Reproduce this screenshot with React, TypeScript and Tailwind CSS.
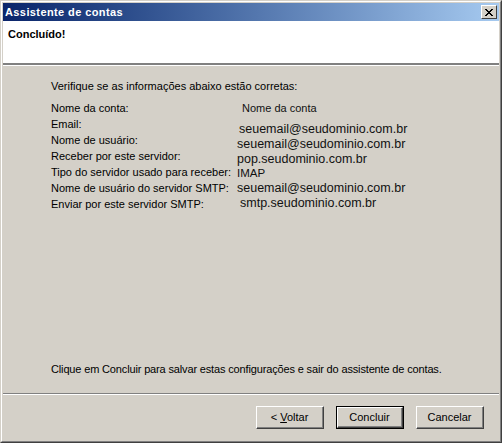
import React from "react"

const labelRows = [
  "Nome da conta:",
  "Email:",
  "Nome de usuário:",
  "Receber por este servidor:",
  "Tipo do servidor usado para receber:",
  "Nome de usuário do servidor SMTP:",
  "Enviar por este servidor SMTP:",
]

// values sit a little off from their labels in the original dialog
const valueRows = [
  { text: "Nome da conta", className: "ml-[5px] text-[11px]" },
  { text: "seuemail@seudominio.com.br", className: "mt-[6px] ml-[2px]" },
  { text: "seuemail@seudominio.com.br", className: "" },
  { text: "pop.seudominio.com.br", className: "" },
  { text: "IMAP", className: "-mt-px text-[11.5px]" },
  { text: "seuemail@seudominio.com.br", className: "" },
  { text: "smtp.seudominio.com.br", className: "ml-[3px]" },
]

const fontClassName = "font-['Liberation_Sans',Arial,sans-serif]"

export default function App() {
  return (
    <div
      className={`h-[443px] w-[502px] border-t border-l border-t-[#d4d0c8] border-l-[#d4d0c8] border-r border-b border-r-[#404040] border-b-[#404040] bg-[#d4d0c8] ${fontClassName}`}
    >
      <div className="flex h-full flex-col border-t border-l border-t-white border-l-white border-r border-b border-r-[#808080] border-b-[#808080] p-px">
        <TitleBar />

        <div className="h-[44px] border-b-2 border-b-[#808080] bg-white">
          <div className="h-[42px] pl-[5px] pt-[7px]">
            <p className="text-[11px] leading-[13px] font-bold text-black">Concluído!</p>
          </div>
        </div>
        <div className="h-px bg-white" />

        <div className="flex flex-1 flex-col">
          <div className="pl-[48px] pt-[14px] text-[11px] text-black">
            <p className="leading-[13px]">
              Verifique se as informações abaixo estão corretas:
            </p>

            <div className="mt-[7px] flex">
              <div className="w-[186px]">
                {labelRows.map((label) => (
                  <p key={label} className="leading-[16px] whitespace-nowrap">
                    {label}
                  </p>
                ))}
              </div>
              <div className="pt-px text-[12.5px] text-[#111]">
                {valueRows.map((row, i) => (
                  <p key={i} className={`leading-[15px] whitespace-nowrap ${row.className}`}>
                    {row.text}
                  </p>
                ))}
              </div>
            </div>
          </div>

          <p className="mt-auto mb-[17px] pl-[48px] text-[11px] leading-[13px] tracking-[-0.15px] text-black">
            Clique em Concluir para salvar estas configurações e sair do assistente de contas.
          </p>

          <div className="h-px bg-[#808080]" />
          <div className="h-px bg-white" />

          <div className="flex justify-end gap-[12px] pt-[11px] pb-[11px] pr-[15px]">
            <WizardButton>
              <span>
                &lt; <span className="underline">V</span>oltar
              </span>
            </WizardButton>
            <WizardButton isDefault>Concluir</WizardButton>
            <WizardButton>Cancelar</WizardButton>
          </div>
        </div>
      </div>
    </div>
  )
}

function TitleBar() {
  return (
    <div className="flex h-[18px] items-center bg-linear-to-r from-[#0a246a] to-[#a6caf0] pl-[2px] pr-[2px]">
      <span className="text-[11px] leading-[13px] font-bold tracking-[0.4px] text-white">
        Assistente de contas
      </span>
      <button
        type="button"
        className="ml-auto flex h-[14px] w-[16px] items-center justify-center border-t border-l border-t-white border-l-white border-r border-b border-r-[#404040] border-b-[#404040] bg-[#d4d0c8]"
      >
        <svg width="8" height="7" viewBox="0 0 8 7" shapeRendering="crispEdges">
          <path
            d="M0 0h2v1h-2zM6 0h2v1h-2zM1 1h2v1h-2zM5 1h2v1h-2zM2 2h4v1h-4zM3 3h2v1h-2zM2 4h4v1h-4zM1 5h2v1h-2zM5 5h2v1h-2zM0 6h2v1h-2zM6 6h2v1h-2z"
            fill="#000"
          />
        </svg>
      </button>
    </div>
  )
}

function WizardButton({
  children,
  isDefault = false,
}: {
  children: React.ReactNode
  isDefault?: boolean
}) {
  const inner = (
    <span className="flex h-full w-full items-center justify-center border-t border-l border-t-white border-l-white border-r border-b border-r-[#404040] border-b-[#404040]">
      <span className="flex h-full w-full items-center justify-center border-r border-b border-r-[#808080] border-b-[#808080] text-[11px] leading-[13px] text-black">
        {children}
      </span>
    </span>
  )

  if (isDefault) {
    return (
      <button type="button" className="h-[23px] w-[68px] border border-black bg-[#d4d0c8]">
        {inner}
      </button>
    )
  }

  return (
    <button type="button" className="h-[23px] w-[68px] bg-[#d4d0c8]">
      {inner}
    </button>
  )
}
